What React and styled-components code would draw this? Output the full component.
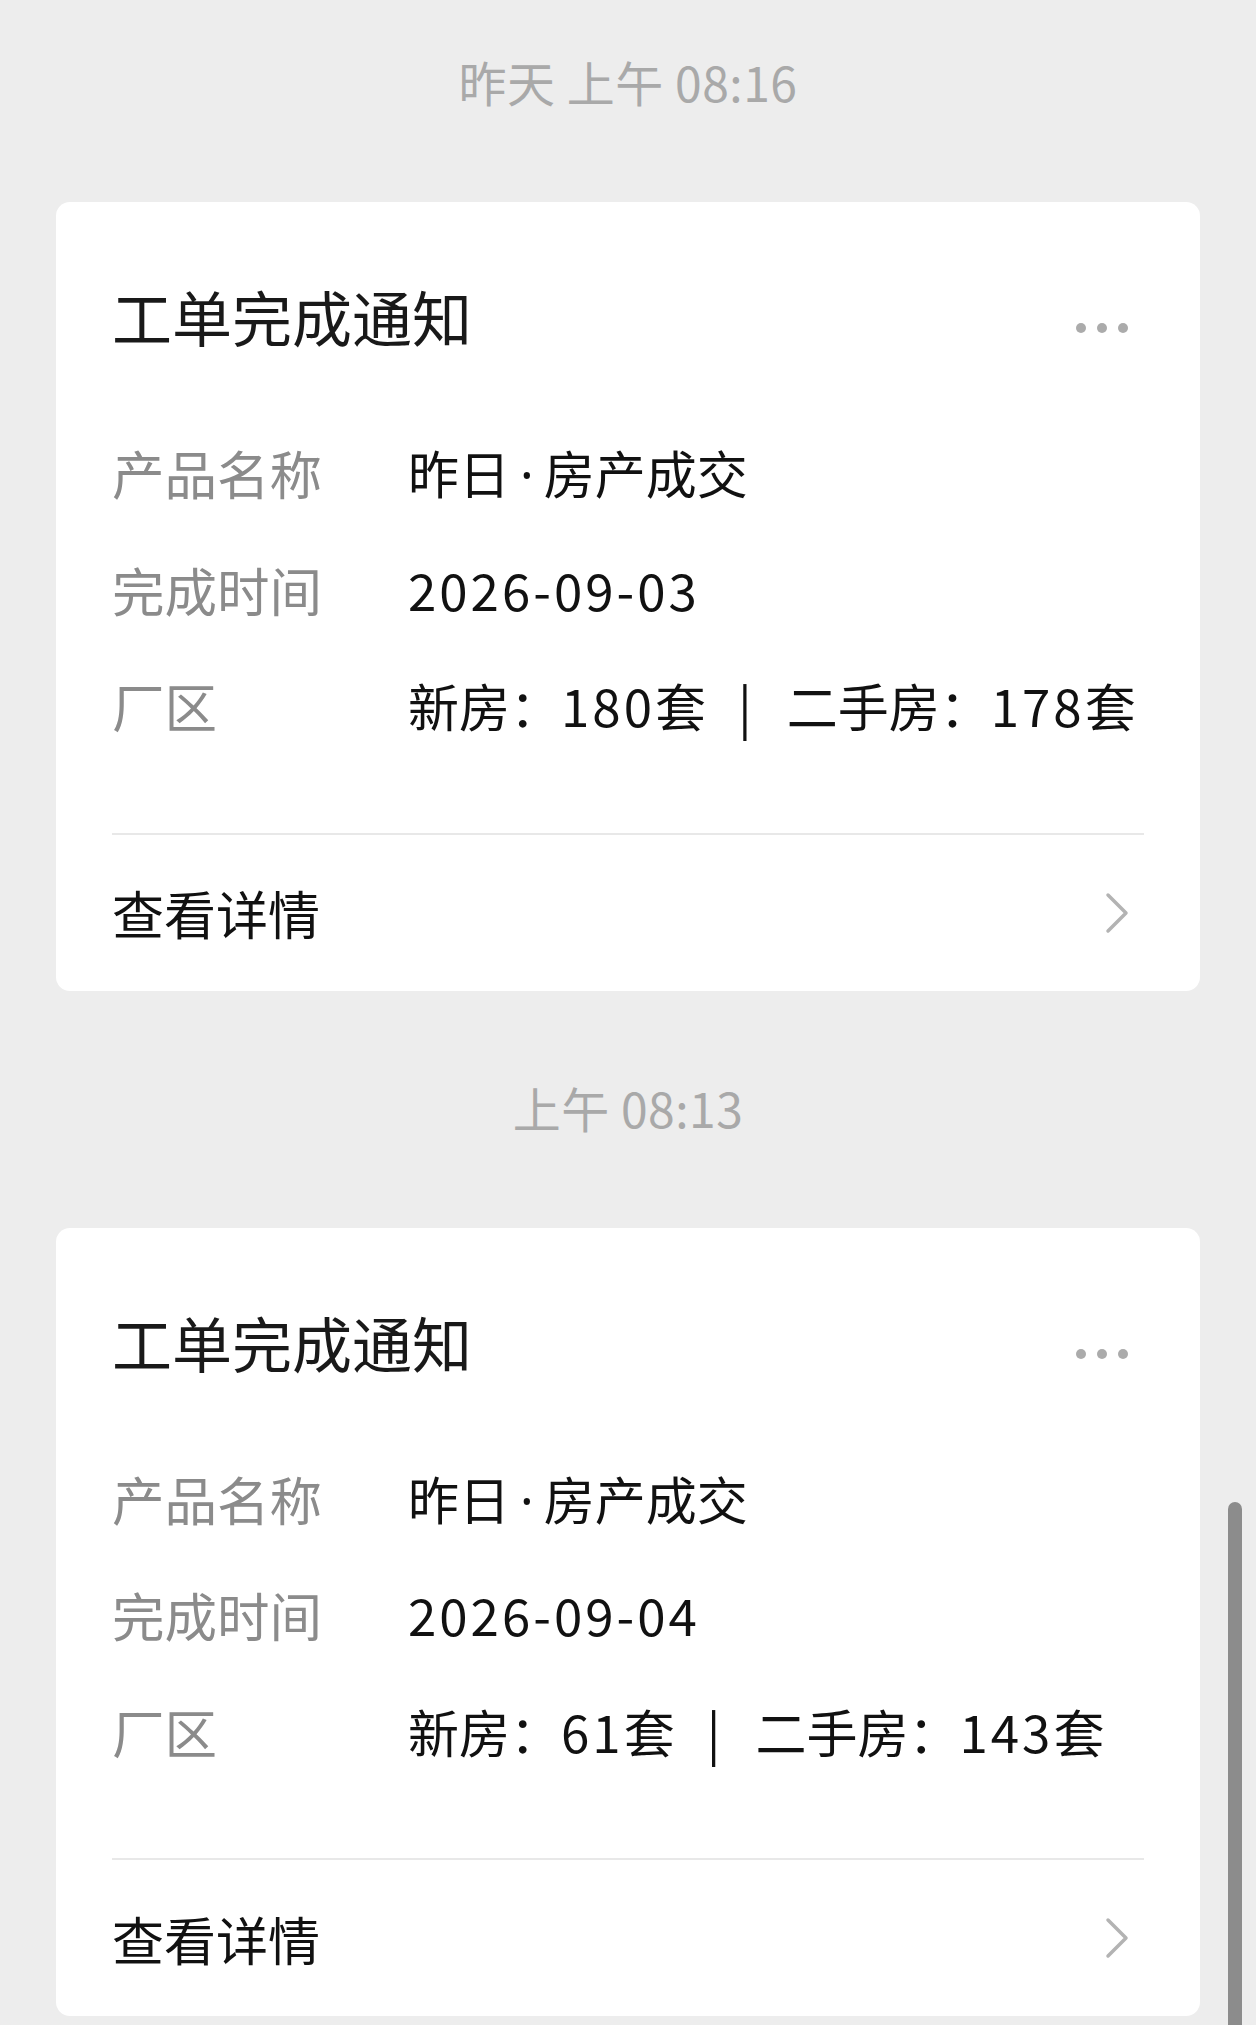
import styled, { createGlobalStyle } from "styled-components";

const GlobalStyle = createGlobalStyle`
  html, body {
    margin: 0;
    padding: 0;
    background: #ededed;
  }
  body {
    font-family: "Noto Sans CJK SC", "Noto Sans", sans-serif;
  }
`;

const Page = styled.div`
  width: 1256px;
  min-height: 2025px;
  background: #ededed;
  position: relative;
  overflow: hidden;
`;

const Stamp = styled.div`
  padding: ${(p) => (p.$first ? "56px" : "91px")} 0 96px;
  line-height: 50px;
  font-size: 48px;
  color: #a9a9a9;
  text-align: center;
  letter-spacing: 0.5px;
`;

const Card = styled.div`
  margin: 0 56px;
  background: #ffffff;
  border-radius: 14px;
`;

const Header = styled.div`
  display: flex;
  align-items: center;
  justify-content: space-between;
  padding: 82px 72px 0 56px;
`;

const Title = styled.h2`
  margin: 0;
  font-size: 60px;
  line-height: 64px;
  font-weight: 400;
  color: #191919;
`;

const Dots = styled.div`
  display: flex;
  gap: 11px;
  margin-top: 24px;
`;

const Dot = styled.span`
  width: 10px;
  height: 10px;
  border-radius: 50%;
  background: #ababab;
`;

const Fields = styled.div`
  display: grid;
  grid-template-columns: 296px 1fr;
  grid-auto-rows: 116.5px;
  align-items: center;
  padding: 66px 56px 69px;
`;

const Label = styled.div`
  font-size: 52.5px;
  color: #8b8b8b;
  white-space: nowrap;
`;

const Value = styled.div`
  font-size: 51px;
  color: #111111;
  white-space: nowrap;
`;

const Num = styled.span`
  letter-spacing: 3px;
`;

const MidDot = styled.span`
  font-family: "Noto Sans", sans-serif;
  padding: 0 10px;
`;

const Sep = styled.span`
  display: inline-block;
  padding: 0 35px 0 32px;
`;

const Divider = styled.div`
  height: 2px;
  margin: 0 56px;
  background: #e8e8e8;
`;

const Footer = styled.div`
  height: 156px;
  display: flex;
  align-items: center;
  justify-content: space-between;
  padding: 0 70px 0 56px;
`;

const Link = styled.span`
  font-size: 52px;
  color: #111111;
`;

const ScrollThumb = styled.div`
  position: absolute;
  left: 1228px;
  top: 1502px;
  width: 14px;
  bottom: -20px;
  border-radius: 7px;
  background: #8c8c8c;
`;

function Chevron() {
  return (
    <svg width="26" height="42" viewBox="0 0 26 42" fill="none">
      <path
        d="M4 3 L22 21 L4 39"
        stroke="#b3b3b3"
        strokeWidth="3.5"
        strokeLinecap="round"
        strokeLinejoin="round"
      />
    </svg>
  );
}

const notices = [
  { stamp: "昨天 上午 08:16", date: "2026-09-03", fresh: 180, resale: 178 },
  { stamp: "上午 08:13", date: "2026-09-04", fresh: 61, resale: 143 },
];

function Notice({ item, first }) {
  return (
    <>
      <Stamp $first={first}>{item.stamp}</Stamp>
      <Card>
        <Header>
          <Title>工单完成通知</Title>
          <Dots>
            <Dot />
            <Dot />
            <Dot />
          </Dots>
        </Header>
        <Fields>
          <Label>产品名称</Label>
          <Value>
            昨日<MidDot>·</MidDot>房产成交
          </Value>
          <Label>完成时间</Label>
          <Value>
            <Num>{item.date}</Num>
          </Value>
          <Label>厂区</Label>
          <Value>
            新房：<Num>{item.fresh}</Num>套<Sep>|</Sep>二手房：
            <Num>{item.resale}</Num>套
          </Value>
        </Fields>
        <Divider />
        <Footer>
          <Link>查看详情</Link>
          <Chevron />
        </Footer>
      </Card>
    </>
  );
}

export default function App() {
  return (
    <Page>
      <GlobalStyle />
      {notices.map((n, i) => (
        <Notice key={n.stamp} item={n} first={i === 0} />
      ))}
      <ScrollThumb />
    </Page>
  );
}
